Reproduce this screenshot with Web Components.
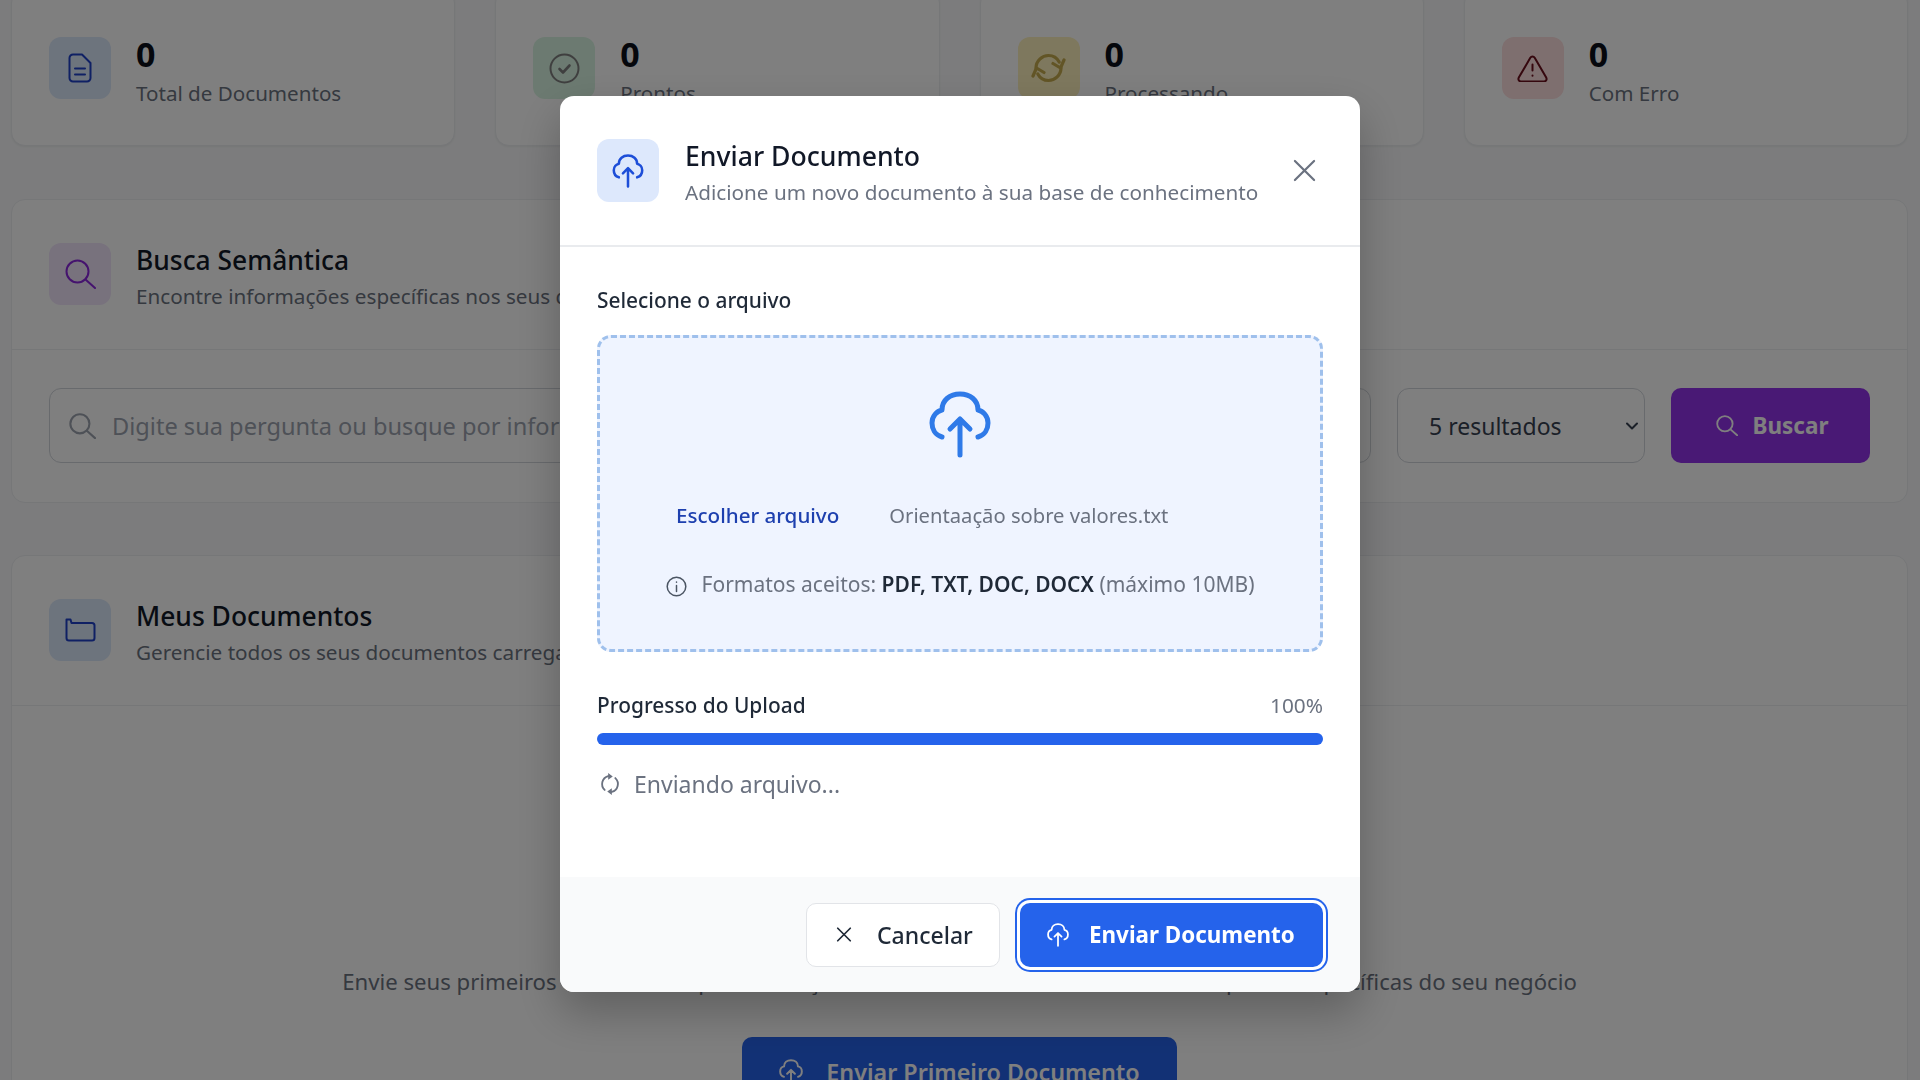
<!DOCTYPE html>
<html lang="pt-BR">
<head>
<meta charset="utf-8">
<title>Documentos</title>
<style>
  html, body { margin: 0; height: 100%; overflow: hidden; }
  body { background: #f8f9fa; font-family: "Noto Sans", sans-serif; color: #111827; }
</style>
</head>
<body>
<doc-page>
  <div slot="stats">
    <stat-card tone="blue" icon="file" value="0" label="Total de Documentos"></stat-card>
    <stat-card tone="green" icon="check" value="0" label="Prontos"></stat-card>
    <stat-card tone="yellow" icon="sync" value="0" label="Processando"></stat-card>
    <stat-card tone="red" icon="warn" value="0" label="Com Erro"></stat-card>
  </div>
  <panel-card slot="search" tone="purple" icon="search" heading="Busca Semântica" sub="Encontre informações específicas nos seus documentos">
    <search-bar></search-bar>
  </panel-card>
  <panel-card slot="docs" tone="blue" icon="folder" heading="Meus Documentos" sub="Gerencie todos os seus documentos carregados">
    <empty-state></empty-state>
  </panel-card>
</doc-page>
<upload-modal></upload-modal>

<script>
(function() {
    const icons = {
        file: { box: "0 0 24 30", w: 24, h: 30, body: '<path d="M5 1.5h9l8.5 8.5v15a3.5 3.5 0 0 1-3.5 3.5H5A3.5 3.5 0 0 1 1.5 25V5A3.5 3.5 0 0 1 5 1.5z"/><path d="M7 15.5h10M7 21.5h10"/>' },
        check: { box: "0 0 31 31", w: 31, h: 31, body: '<circle cx="15.5" cy="15.5" r="14"/><path d="M10.5 16l3.5 3.500 6.500-7" stroke-width="2.6"/>' },
        sync: { box: "0 0 35 30", w: 35, h: 30, body: '<g stroke-width="3.200"><path d="M5 15C5 8 11 2.5 17.5 2.5c4.6 0 8.6 2.5 10.7 6.5"/><path d="M33 7l-3.500 8-7.500-4.500"/><path d="M30 15c0 7-6 12.500-12.500 12.500-4.600 0-8.600-2.500-10.700-6.500"/><path d="M2 23l3.500-8 7.500 4.500"/></g>' },
        warn: { box: "0 0 31 27", w: 31, h: 27, body: '<path d="M13.300 2.800a2.600 2.600 0 0 1 4.400 0l11.500 19.800a2.600 2.600 0 0 1-2.200 3.900H4a2.600 2.600 0 0 1-2.200-3.900z"/><path d="M15.500 9.500v6M15.500 20.500v.2"/>' },
        search: { box: "0 0 31 30", w: 31, h: 30, body: '<circle cx="12.500" cy="12.500" r="11"/><path d="M20.500 20.500L30 29"/>' },
        folder: { box: "0 0 31 24", w: 31, h: 24, body: '<path d="M1.500 1.500h4l1 3.500H27a2.500 2.500 0 0 1 2.500 2.500V20a2.500 2.500 0 0 1-2.500 2.500H4A2.500 2.500 0 0 1 1.500 20z"/>' },
        cloud: { box: "0 0 62 67", w: 62, h: 67, body: '<g stroke-width="5"><path d="M13 46C6 44 3 38 3 32c0-7 5-12 10-13C13 9 21 3 31 3s18 6 18 16c5 1 10 6 10 13 0 6-3 12-10 14"/><path d="M31 64V28M21 38l10-10 10 10"/></g>' },
        close: { box: "0 0 24 24", w: 24, h: 24, body: '<path d="M2 2l20 20M22 2L2 22"/>' },
        repeat: { box: "0 0 24 24", w: 22, h: 24, body: '<path d="M6.200 18.500A9 9 0 0 1 10 3.300M17.800 5.500A9 9 0 0 1 14 20.700"/><path d="M10 0l5 3.700-5 3.700zM14 16.600l-5 3.700 5 3.700z" fill="currentColor" stroke="none"/>' },
        info: { box: "0 0 21 21", w: 21, h: 21, body: '<circle cx="10.500" cy="10.500" r="9.300"/><path d="M10.500 9.500v6M10.500 6v.2"/>' },
        chevron: { box: "0 0 12 8", w: 12, h: 8, body: '<path d="M1 1.500l5 5 5-5"/>' }
    };

    class UiIcon extends HTMLElement {
        constructor() {
            super();
            const i = icons[this.getAttribute("name")];
            const w = this.getAttribute("w") || i.w;
            const h = this.getAttribute("h") || i.h;
            const sw = this.getAttribute("sw") || 2;
            this.attachShadow({mode: "open"}).innerHTML = `
            <style>:host { display: inline-flex; flex: none; } svg { display: block; }</style>
            <svg width="${w}" height="${h}" viewBox="${i.box}" fill="none" stroke="currentColor"
                 stroke-width="${sw}" stroke-linecap="round" stroke-linejoin="round">${i.body}</svg>`;
        }
    }
    customElements.define("ui-icon", UiIcon);

    const tones = {
        blue:   { bg: "#dbe8fb", fg: "#1e40c8" },
        green:  { bg: "#d9f5e2", fg: "#7f7f7f" },
        yellow: { bg: "#fdf0bc", fg: "#c4aa4c" },
        red:    { bg: "#fddede", fg: "#6b0f1c" },
        purple: { bg: "#f0e4fb", fg: "#8a26dc" }
    };

    class IconBox extends HTMLElement {
        constructor() {
            super();
            const t = tones[this.getAttribute("tone")];
            this.attachShadow({mode: "open"}).innerHTML = `
            <style>
              :host { display: flex; flex: none; width: 62px; height: 62px; align-items: center; justify-content: center;
                      border-radius: 12px; background: ${t.bg}; color: ${t.fg}; }
            </style>
            <ui-icon name="${this.getAttribute("icon")}"></ui-icon>`;
        }
    }
    customElements.define("icon-box", IconBox);

    class DocPage extends HTMLElement {
        constructor() {
            super();
            this.attachShadow({mode: "open"}).innerHTML = `
            <style>
              :host { display: block; padding: 0 12px 0 11px; margin-top: -11px; }
              .stats { margin-bottom: 53px; }
              ::slotted([slot=stats]) { display: grid; grid-template-columns: repeat(4, 1fr); gap: 40px; }
              ::slotted([slot=search]) { margin-bottom: 52px; }
            </style>
            <div class="stats"><slot name="stats"></slot></div>
            <slot name="search"></slot>
            <slot name="docs"></slot>`;
        }
    }
    customElements.define("doc-page", DocPage);

    class StatCard extends HTMLElement {
        constructor() {
            super();
            this.attachShadow({mode: "open"}).innerHTML = `
            <style>
              :host { display: flex; gap: 25px; padding: 47px 37px 38px; background: #fff; border: 1px solid #eceef1;
                      border-radius: 14px; box-shadow: 0 1px 2px rgba(0,0,0,.05); }
              .val { font-size: 34px; font-weight: 700; line-height: 34px; color: #0b0f19; }
              .lab { font-size: 20.6px; line-height: 28px; margin-top: 8px; color: #6b7280; white-space: nowrap; }
            </style>
            <icon-box tone="${this.getAttribute("tone")}" icon="${this.getAttribute("icon")}"></icon-box>
            <div>
              <div class="val">${this.getAttribute("value")}</div>
              <div class="lab">${this.getAttribute("label")}</div>
            </div>`;
        }
    }
    customElements.define("stat-card", StatCard);

    class PanelCard extends HTMLElement {
        constructor() {
            super();
            this.attachShadow({mode: "open"}).innerHTML = `
            <style>
              :host { display: block; background: #fff; border: 1px solid #eceef1; border-radius: 14px; }
              header { display: flex; gap: 25px; padding: 43px 37px 44px; border-bottom: 1px solid #eceef1; }
              .tx { height: 62px; }
              h2 { margin: 0; font-size: 26.400px; line-height: 34px; font-weight: 500; color: #111827; }
              p { margin: 5px 0 0; font-size: 20.7px; line-height: 28px; color: #6b7280; white-space: nowrap; }
            </style>
            <header>
              <icon-box tone="${this.getAttribute("tone")}" icon="${this.getAttribute("icon")}"></icon-box>
              <div class="tx">
                <h2>${this.getAttribute("heading")}</h2>
                <p>${this.getAttribute("sub")}</p>
              </div>
            </header>
            <slot></slot>`;
        }
    }
    customElements.define("panel-card", PanelCard);

    class SearchBar extends HTMLElement {
        constructor() {
            super();
            this.attachShadow({mode: "open"}).innerHTML = `
            <style>
              :host { display: flex; gap: 26px; padding: 38px 37px 39px 37px; align-items: stretch; }
              .field, .select { display: flex; align-items: center; height: 75px; box-sizing: border-box;
                                border: 1.500px solid #d1d5db; border-radius: 12px; background: #fff; }
              .field { flex: 1; padding: 0 19px; gap: 16px; color: #9ca3af; font-size: 23.600px; white-space: nowrap; }
              .select { width: 248px; padding: 0 6px 0 31px; justify-content: space-between; font-size: 23px; color: #374151; }
              .select ui-icon { color: #374151; }
              .btn { display: flex; align-items: center; justify-content: center; gap: 14px; width: 199px; height: 75px; padding-left: 4px;
                     box-sizing: border-box; border-radius: 10px; background: #9333ea; color: #fff; font-size: 22.500px; font-weight: 700; }
            </style>
            <div class="field"><ui-icon name="search" w="27" h="26" sw="2.400"></ui-icon><span>Digite sua pergunta ou busque por informações</span></div>
            <div class="select"><span>5 resultados</span><ui-icon name="chevron" sw="2"></ui-icon></div>
            <div class="btn"><ui-icon name="search" w="22" h="21" sw="2.600"></ui-icon><span>Buscar</span></div>`;
        }
    }
    customElements.define("search-bar", SearchBar);

    class EmptyState extends HTMLElement {
        constructor() {
            super();
            this.attachShadow({mode: "open"}).innerHTML = `
            <style>
              :host { display: flex; flex-direction: column; align-items: center; padding-top: 260px; }
              p { margin: 0 0 41px; font-size: 22.150px; line-height: 30px; color: #6b7280; white-space: nowrap; }
              .btn { display: flex; align-items: center; justify-content: center; gap: 23px; width: 435px; height: 70px; box-sizing: border-box;
                     border-radius: 10px 10px 0 0; background: #2563eb; color: #fff; font-size: 23.300px; font-weight: 600; }
            </style>
            <p>Envie seus primeiros documentos para começar a usar a busca semântica e obter respostas específicas do seu negócio</p>
            <div class="btn"><ui-icon name="cloud" w="24" h="26" sw="5"></ui-icon><span>Enviar Primeiro Documento</span></div>`;
        }
    }
    customElements.define("empty-state", EmptyState);

    class DropZone extends HTMLElement {
        constructor() {
            super();
            this.attachShadow({mode: "open"}).innerHTML = `
            <style>
              :host { display: flex; flex-direction: column; align-items: center; height: 317px; box-sizing: border-box; padding-top: 53px;
                      border: 3px dashed #9fc0ec; border-radius: 14px; background: #eff4ff; }
              ui-icon.up { color: #2f7ae8; }
              .file { display: flex; width: 568px; height: 28px; margin-top: 43px; line-height: 28px; font-size: 20.200px; white-space: nowrap; }
              .pick { color: #1e40af; font-weight: 500; font-size: 20.600px; margin-right: 50px; }
              .name { color: #6b7280; }
              .info { display: flex; align-items: center; gap: 15px; height: 28px; margin-top: 41px; font-size: 21px; color: #6b7280; white-space: nowrap; }
              .info ui-icon { color: #4b5563; position: relative; top: 2px; }
              b { font-weight: 600; color: #1f2937; }
            </style>
            <ui-icon class="up" name="cloud"></ui-icon>
            <div class="file"><span class="pick">Escolher arquivo</span><span class="name">Orientaação sobre valores.txt</span></div>
            <div class="info"><ui-icon name="info" sw="1.500"></ui-icon><span>Formatos aceitos: <b>PDF, TXT, DOC, DOCX</b> (máximo 10MB)</span></div>`;
        }
    }
    customElements.define("drop-zone", DropZone);

    class UploadProgress extends HTMLElement {
        constructor() {
            super();
            this.attachShadow({mode: "open"}).innerHTML = `
            <style>
              :host { display: block; margin-top: 40px; }
              .row { display: flex; justify-content: space-between; height: 28px; line-height: 26px; }
              .lab { font-size: 20.900px; font-weight: 500; color: #1f2937; }
              .pct { font-size: 20.800px; color: #6b7280; }
              .bar { height: 12px; margin-top: 13px; border-radius: 6px; background: #2563eb; }
              .status { display: flex; align-items: center; gap: 13px; height: 30px; margin-top: 24px; font-size: 23px; color: #6b7280; }
              .status ui-icon { margin-left: 2px; }
            </style>
            <div class="row"><span class="lab">Progresso do Upload</span><span class="pct">100%</span></div>
            <div class="bar"></div>
            <div class="status"><ui-icon name="repeat" sw="2"></ui-icon><span>Enviando arquivo...</span></div>`;
        }
    }
    customElements.define("upload-progress", UploadProgress);

    class UploadModal extends HTMLElement {
        constructor() {
            super();
            this.attachShadow({mode: "open"}).innerHTML = `
            <style>
              :host { position: fixed; inset: 0; display: flex; justify-content: center; align-items: flex-start;
                      padding-top: 96px; box-sizing: border-box; background: rgba(0,0,0,.5); }
              .dialog { width: 800px; background: #fff; border-radius: 14px; overflow: hidden; box-shadow: 0 20px 45px rgba(0,0,0,.25); }
              header { display: flex; align-items: center; gap: 26px; padding: 43px 44px 43px 37px; border-bottom: 2px solid #e9ebee; }
              .ic { display: flex; flex: none; width: 62px; height: 63px; align-items: center; justify-content: center;
                    border-radius: 12px; background: #dde8fc; color: #1d4ed8; }
              .tx { flex: 1; height: 63px; }
              h3 { margin: 0; font-size: 26.600px; line-height: 34px; font-weight: 500; color: #111827; }
              .sub { margin-top: 5px; font-size: 20.700px; line-height: 28px; color: #6b7280; white-space: nowrap; }
              .x { color: #6b7280; }
              .body { padding: 39px 37px 0 37px; height: 630px; box-sizing: border-box; }
              .label { font-size: 20.900px; font-weight: 500; line-height: 28px; margin-bottom: 21px; color: #1f2937; }
              footer { display: flex; justify-content: flex-end; align-items: center; gap: 20px; height: 115px; box-sizing: border-box;
                       padding: 0 37px 0 0; background: #f9fafb; }
              .btn { display: flex; align-items: center; height: 64px; box-sizing: border-box; border-radius: 10px; font-size: 23px; white-space: nowrap; }
              .cancel { width: 194px; padding-left: 29px; gap: 25px; background: #fff; border: 1.500px solid #e2e4e8; color: #1f2937; font-weight: 500; }
              .send { width: 303px; padding-left: 27px; gap: 20px; background: #2563eb; color: #fff; font-weight: 700; font-size: 22.400px;
                      box-shadow: 0 0 0 3px #fff, 0 0 0 5px #2563eb; }
            </style>
            <div class="dialog">
              <header>
                <div class="ic"><ui-icon name="cloud" w="32" h="34" sw="5"></ui-icon></div>
                <div class="tx">
                  <h3>Enviar Documento</h3>
                  <div class="sub">Adicione um novo documento à sua base de conhecimento</div>
                </div>
                <ui-icon class="x" name="close" w="23" h="23" sw="2.300"></ui-icon>
              </header>
              <div class="body">
                <div class="label">Selecione o arquivo</div>
                <drop-zone></drop-zone>
                <upload-progress></upload-progress>
              </div>
              <footer>
                <div class="btn cancel"><ui-icon name="close" w="16" h="15" sw="2.800"></ui-icon><span>Cancelar</span></div>
                <div class="btn send"><ui-icon name="cloud" w="22" h="24" sw="5"></ui-icon><span>Enviar Documento</span></div>
              </footer>
            </div>`;
        }
    }
    customElements.define("upload-modal", UploadModal);
})();
</script>
</body>
</html>
